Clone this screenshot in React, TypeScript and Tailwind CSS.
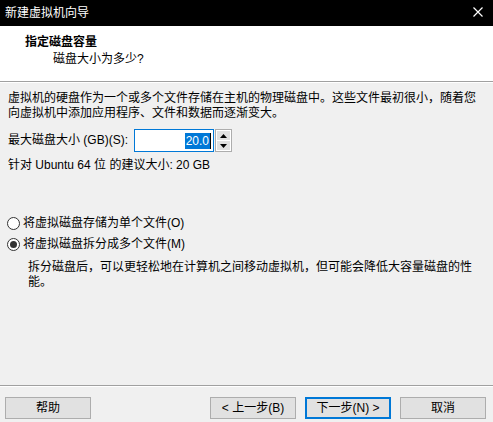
import { useState } from "react";

const font = "font-['Liberation_Sans','Noto_Sans_CJK_SC',sans-serif]";

function Radio({ checked, label, onClick }: { checked: boolean; label: string; onClick: () => void }) {
  return (
    <button onClick={onClick} className="flex items-center h-[15px] pl-[7px] text-left">
      <span className="w-[13px] h-[13px] rounded-full border border-[#333] bg-white flex items-center justify-center shrink-0">
        {checked && <span className="w-[7px] h-[7px] rounded-full bg-[#333]" />}
      </span>
      <span className="ml-[3px]">{label}</span>
    </button>
  );
}

function DlgButton({ children, primary }: { children: React.ReactNode; primary?: boolean }) {
  return (
    <button
      className={`w-[86px] h-[22px] bg-[#e1e1e1] flex items-center justify-center leading-none ${
        primary ? "border-2 border-[#0078d7]" : "border border-[#adadad]"
      }`}
    >
      {children}
    </button>
  );
}

export default function App() {
  const [split, setSplit] = useState(true);

  return (
    <div className={`w-[493px] h-[422px] flex flex-col bg-[#f0f0f0] text-[12px] text-black ${font}`}>
      {/* title bar */}
      <div className="h-[26px] bg-black text-white flex items-center justify-between pl-[5px] pr-[10px] shrink-0">
        <span className="leading-none">新建虚拟机向导</span>
        <svg width="10" height="10" viewBox="0 0 10 10" className="mt-[-2px]">
          <path d="M0.5 0.5 L9.5 9.5 M9.5 0.5 L0.5 9.5" stroke="white" strokeWidth="1.2" />
        </svg>
      </div>

      {/* header */}
      <div className="h-[55px] bg-white pt-2 leading-[16px] shrink-0">
        <div className="pl-[25px] font-bold">指定磁盘容量</div>
        <div className="pl-[53px] mt-[1px]">磁盘大小为多少?</div>
      </div>
      <div className="h-px bg-[#a0a0a0] shrink-0" />
      <div className="h-px bg-white shrink-0" />

      {/* content */}
      <div className="flex-1 flex flex-col px-2 pt-2 leading-[15px] whitespace-nowrap">
        <div>虚拟机的硬盘作为一个或多个文件存储在主机的物理磁盘中。这些文件最初很小，随着您</div>
        <div>向虚拟机中添加应用程序、文件和数据而逐渐变大。</div>

        <div className="flex items-center mt-[8px] h-[23px]">
          <span className="w-[126px]">最大磁盘大小 (GB)(S):</span>
          <div className="w-[80px] h-[23px] border border-[#0078d7] bg-white flex items-center justify-end pr-[2px]">
            <span className="bg-[#0078d7] text-white leading-[16px] px-px">20.0</span>
            <span className="w-px h-[16px] bg-black" />
          </div>
          <div className="w-[17px] h-[23px] ml-px border border-[#adadad] bg-white flex flex-col p-px gap-px">
            <span className="flex-1 bg-[#e1e1e1] flex items-center justify-center">
              <svg width="7" height="4" viewBox="0 0 7 4">
                <path d="M3.5 0 L7 4 L0 4 Z" fill="#000" />
              </svg>
            </span>
            <span className="flex-1 bg-[#e1e1e1] flex items-center justify-center">
              <svg width="7" height="4" viewBox="0 0 7 4">
                <path d="M0 0 L7 0 L3.5 4 Z" fill="#000" />
              </svg>
            </span>
          </div>
        </div>

        <div className="mt-[6px]">针对 Ubuntu 64 位 的建议大小: 20 GB</div>

        <div className="flex flex-col -ml-2 mt-[43px] gap-[6px]">
          <Radio checked={!split} label="将虚拟磁盘存储为单个文件(O)" onClick={() => setSplit(false)} />
          <Radio checked={split} label="将虚拟磁盘拆分成多个文件(M)" onClick={() => setSplit(true)} />
        </div>
        <div className="ml-5 mt-[8px]">
          <div>拆分磁盘后，可以更轻松地在计算机之间移动虚拟机，但可能会降低大容量磁盘的性</div>
          <div>能。</div>
        </div>
      </div>

      {/* footer */}
      <div className="h-px bg-[#a0a0a0] shrink-0" />
      <div className="h-px bg-white shrink-0" />
      <div className="h-[35px] shrink-0 flex items-start pt-[10px] pl-[5px] pr-[7px]">
        <DlgButton>帮助</DlgButton>
        <div className="flex-1" />
        <div className="flex gap-[9px]">
          <DlgButton>&lt; 上一步(B)</DlgButton>
          <DlgButton primary>下一步(N) &gt;</DlgButton>
          <DlgButton>取消</DlgButton>
        </div>
      </div>
    </div>
  );
}
